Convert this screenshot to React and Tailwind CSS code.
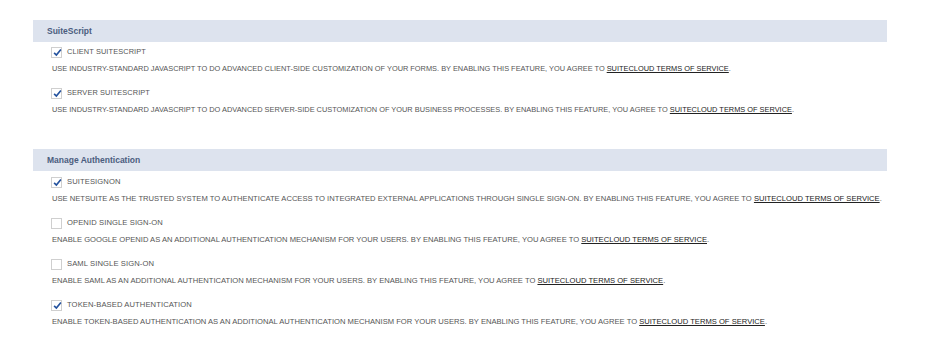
import React from "react";

function Check({ checked }) {
  return (
    <span className="relative inline-block w-[11px] h-[11px] border border-[#cfcfcf] bg-white shrink-0">
      {checked && (
        <svg viewBox="0 0 12 12" className="absolute left-[1px] top-[0px] w-[9px] h-[9px]">
          <path d="M1.5 6.5 L4.5 9.5 L10.5 2" fill="none" stroke="#24529e" strokeWidth="2.2" />
        </svg>
      )}
    </span>
  );
}

function Item({ checked, label, desc, big }) {
  const size = big ? "text-[7.62px]" : "text-[7.4px]";
  return (
    <div className="pl-[51px]">
      <div className="flex items-center gap-[5px] h-[12px]">
        <Check checked={checked} />
        <span className={`${size} text-[#555] tracking-[0.1px]`}>{label}</span>
      </div>
      <div className={`mt-[6px] ${size} text-[#555] leading-[9px] pl-[1px]`}>
        {desc} BY ENABLING THIS FEATURE, YOU AGREE TO{" "}
        <span className="underline text-[#222]">SUITECLOUD TERMS OF SERVICE</span>.
      </div>
    </div>
  );
}

function Header({ title }) {
  return (
    <div className="mx-[33px] w-[854px] h-[22px] bg-[#dde3ee] flex items-center pl-[14px]">
      <span className="text-[8.5px] font-bold text-[#4b5d7e]">{title}</span>
    </div>
  );
}

export default function App() {
  return (
    <div
      className="w-[932px] h-[356px] bg-white overflow-hidden pt-[20px]"
      style={{ fontFamily: '"Liberation Sans", Arial, sans-serif' }}
    >
      <Header title="SuiteScript" />
      <div className="pt-[4px] flex flex-col gap-[14px]">
        <Item
          checked
          label="CLIENT SUITESCRIPT"
          desc="USE INDUSTRY-STANDARD JAVASCRIPT TO DO ADVANCED CLIENT-SIDE CUSTOMIZATION OF YOUR FORMS."
        />
        <Item
          checked
          label="SERVER SUITESCRIPT"
          desc="USE INDUSTRY-STANDARD JAVASCRIPT TO DO ADVANCED SERVER-SIDE CUSTOMIZATION OF YOUR BUSINESS PROCESSES."
        />
      </div>
      <div className="mt-[35px]">
        <Header title="Manage Authentication" />
      </div>
      <div className="pt-[5px] flex flex-col gap-[14px]">
        <Item
          big
          checked
          label="SUITESIGNON"
          desc="USE NETSUITE AS THE TRUSTED SYSTEM TO AUTHENTICATE ACCESS TO INTEGRATED EXTERNAL APPLICATIONS THROUGH SINGLE SIGN-ON."
        />
        <Item
          big
          label="OPENID SINGLE SIGN-ON"
          desc="ENABLE GOOGLE OPENID AS AN ADDITIONAL AUTHENTICATION MECHANISM FOR YOUR USERS."
        />
        <Item
          big
          label="SAML SINGLE SIGN-ON"
          desc="ENABLE SAML AS AN ADDITIONAL AUTHENTICATION MECHANISM FOR YOUR USERS."
        />
        <Item
          big
          checked
          label="TOKEN-BASED AUTHENTICATION"
          desc="ENABLE TOKEN-BASED AUTHENTICATION AS AN ADDITIONAL AUTHENTICATION MECHANISM FOR YOUR USERS."
        />
      </div>
    </div>
  );
}
